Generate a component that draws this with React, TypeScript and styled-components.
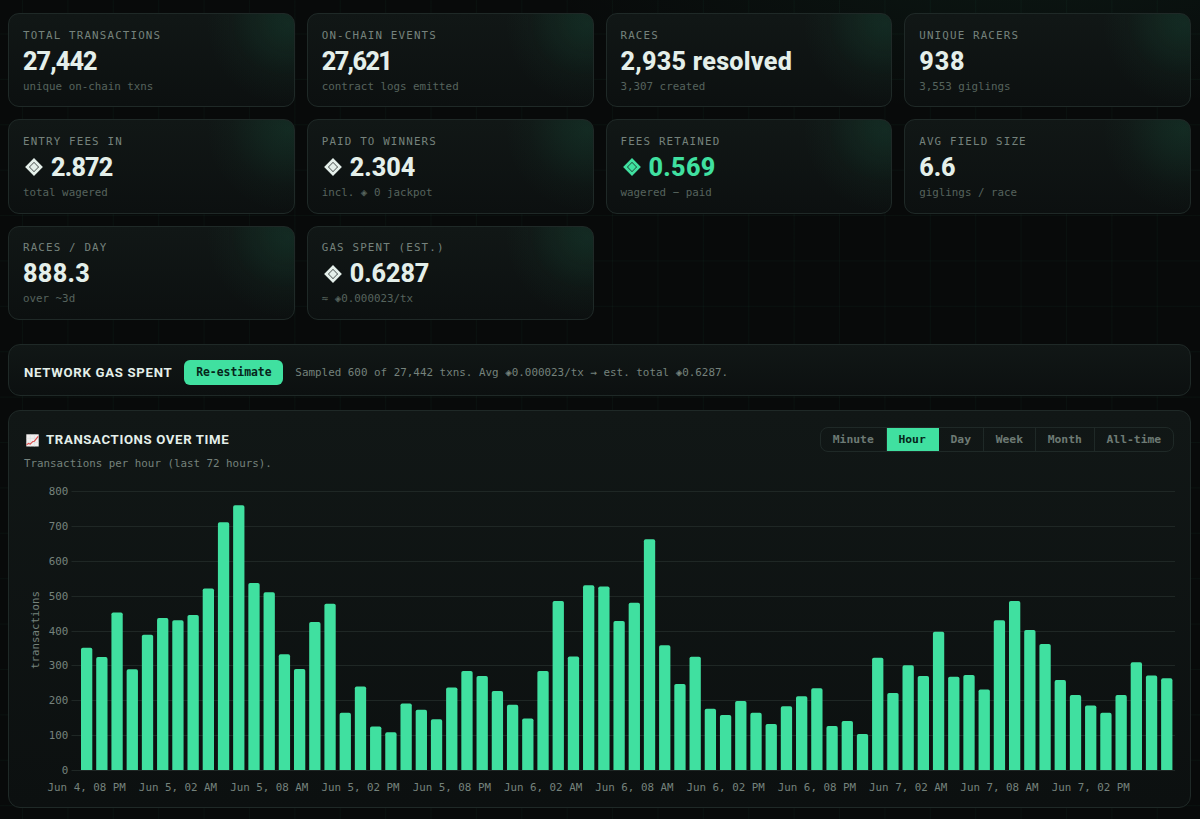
import React from "react";
import styled, { createGlobalStyle } from "styled-components";

const MONO = '"DejaVu Sans Mono", "Liberation Mono", monospace';
const DISPLAY = 'Roboto, "Liberation Sans", sans-serif';

const GlobalStyle = createGlobalStyle`
  * { box-sizing: border-box; }
  html { background: #080a0a; }
  body {
    margin: 0;
    min-height: 819px;
    font-family: ${MONO};
    color: #e4efea;
    overflow: hidden;
    background:
      linear-gradient(90deg, rgba(62, 224, 160, 0.035) 1px, transparent 1px) 22px 0 / 45.4px 45.4px,
      linear-gradient(rgba(62, 224, 160, 0.035) 1px, transparent 1px) 0 33.5px / 45.4px 45.4px,
      radial-gradient(700px 220px at 85% -40px, rgba(62, 224, 160, 0.06), transparent 70%),
      #080a0a;
  }
`;

const Page = styled.main`
  display: flex;
  flex-direction: column;
  height: 819px;
  padding: 13px 9px 11px 8px;
`;

const StatGrid = styled.section`
  display: grid;
  grid-template-columns: repeat(4, 1fr);
  grid-auto-rows: 94.4px;
  gap: 12px;
  margin-bottom: 24px;
`;

const StatCard = styled.article`
  display: flex;
  flex-direction: column;
  padding: 14.6px 14px 11px;
  border: 1px solid #1f2927;
  border-radius: 11px;
  background:
    radial-gradient(circle 82px at calc(100% - 6px) 10px, rgba(40, 190, 130, 0.12), rgba(40, 190, 130, 0.085) 30%, rgba(40, 190, 130, 0.025) 70%, transparent 100%),
    linear-gradient(#111716, #0c1010);
`;

const StatLabel = styled.span`
  height: 14px;
  font-size: 10.85px;
  line-height: 14px;
  letter-spacing: 1.15px;
  color: #75827c;
  white-space: pre;
`;

const StatValue = styled.strong<{ $accent?: boolean; $track?: number }>`
  display: flex;
  align-items: center;
  height: 30px;
  margin: 4px 0 3px;
  font-family: ${DISPLAY};
  font-size: 25.2px;
  font-weight: 800;
  line-height: 30px;
  letter-spacing: ${(p) => p.$track ?? -0.6}px;
  color: ${(p) => (p.$accent ? "#40e0a0" : "#e4efea")};
  white-space: pre;
`;

const Gem = styled.svg`
  flex: none;
  width: 18px;
  height: 18px;
  margin: 0 8px 1px 2px;
`;

const StatNote = styled.span`
  height: 14px;
  font-size: 10.83px;
  line-height: 14px;
  color: #56635d;
  white-space: pre;
`;

const Panel = styled.section`
  border: 1px solid #1f2927;
  border-radius: 12px;
  background: linear-gradient(#111716, #0c1010);
`;

const GasPanel = styled(Panel)`
  display: flex;
  align-items: center;
  gap: 12px;
  height: 52px;
  padding: 5.4px 15px 0;
  margin-bottom: 14px;
`;

const Title = styled.h2<{ $track: number }>`
  margin: 0;
  font-family: ${DISPLAY};
  font-size: 13.2px;
  font-weight: 700;
  line-height: 18px;
  letter-spacing: ${(p) => p.$track}px;
  color: #e4efea;
  white-space: nowrap;
`;

const PrimaryButton = styled.button`
  width: 99px;
  height: 25px;
  padding: 0;
  border: 0;
  border-radius: 6px;
  background: #40e0a0;
  color: #06251a;
  font: 700 11.4px/25px ${MONO};
`;

const GasNote = styled.span`
  font-size: 10.9px;
  color: #75827c;
  white-space: nowrap;
`;

const ChartPanel = styled(Panel)`
  height: 398px;
  padding: 16px 16px 0 15px;
`;

const ChartHeader = styled.header`
  display: flex;
  align-items: flex-start;
  justify-content: space-between;
  height: 26px;
`;

const ChartTitle = styled.div`
  display: flex;
  align-items: center;
  gap: 7px;
  height: 26px;
  padding-left: 2px;
`;

const Segments = styled.div`
  display: flex;
  height: 25px;
  border: 1px solid #1f2927;
  border-radius: 8px;
  overflow: hidden;
`;

const Segment = styled.button<{ $active?: boolean }>`
  padding: 0 11.85px;
  border: 0;
  border-right: 1px solid ${(p) => (p.$active ? "#40e0a0" : "#1f2927")};
  background: ${(p) => (p.$active ? "#40e0a0" : "transparent")};
  color: ${(p) => (p.$active ? "#06251a" : "#6d7a74")};
  font: 700 11.35px/23px ${MONO};
  &:last-child { border-right: 0; }
`;

const ChartNote = styled.p`
  height: 14px;
  margin: 4px 0 0;
  font-size: 10.83px;
  line-height: 14px;
  color: #75827c;
`;

const Chart = styled.svg`
  display: block;
  margin-top: 9px;
  overflow: visible;
  font-family: ${MONO};
  font-size: 10.83px;
`;

type Stat = { label: string; value: string; note: string; gem?: boolean; accent?: boolean; track?: number };

const STATS: Stat[] = [
  { label: "TOTAL TRANSACTIONS", value: "27,442", note: "unique on-chain txns", track: -0.9 },
  { label: "ON-CHAIN EVENTS", value: "27,621", note: "contract logs emitted", track: -1.6 },
  { label: "RACES", value: "2,935 resolved", note: "3,307 created", track: 0.25 },
  { label: "UNIQUE RACERS", value: "938", note: "3,553 giglings", track: 0.9 },
  { label: "ENTRY FEES IN", value: "2.872", note: "total wagered", gem: true, track: -0.8 },
  { label: "PAID TO WINNERS", value: "2.304", note: "incl. ◈ 0 jackpot", gem: true, track: 0 },
  { label: "FEES RETAINED", value: "0.569", note: "wagered − paid", gem: true, accent: true, track: 0.3 },
  { label: "AVG FIELD SIZE", value: "6.6", note: "giglings / race", track: -0.1 },
  { label: "RACES / DAY", value: "888.3", note: "over ~3d", track: 0.3 },
  { label: "GAS SPENT (EST.)", value: "0.6287", note: "≈ ◈0.000023/tx", gem: true, track: -0.1 },
];

const RANGES = ["Minute", "Hour", "Day", "Week", "Month", "All-time"];

const COUNTS = [
  351, 324, 452, 289, 388, 436, 430, 445, 521, 711, 760, 537, 510, 332, 290, 425, 477, 164, 240, 125, 108,
  191, 173, 146, 237, 284, 270, 227, 187, 148, 284, 485, 326, 530, 527, 428, 480, 662, 358, 247, 325, 176,
  158, 198, 164, 132, 183, 212, 235, 126, 141, 103, 322, 221, 301, 270, 397, 268, 273, 231, 430, 485, 402,
  362, 258, 215, 185, 164, 215, 309, 271, 263,
];

const TICKS = [0, 100, 200, 300, 400, 500, 600, 700, 800];
const DATES = [
  "Jun 4, 08 PM", "Jun 5, 02 AM", "Jun 5, 08 AM", "Jun 5, 02 PM", "Jun 5, 08 PM", "Jun 6, 02 AM",
  "Jun 6, 08 AM", "Jun 6, 02 PM", "Jun 6, 08 PM", "Jun 7, 02 AM", "Jun 7, 08 AM", "Jun 7, 02 PM",
];

const BASE = 290;
const UNIT = 0.3484;
const STEP = 15.213;
const LEFT = 57;
const BAR = 11.3;

const barPath = (x: number, h: number) => {
  const top = BASE - h;
  const r = 1.8;
  return `M${x} ${BASE}V${top + r}Q${x} ${top} ${x + r} ${top}H${x + BAR - r}Q${x + BAR} ${top} ${x + BAR} ${top + r}V${BASE}Z`;
};

const GemIcon = () => (
  <Gem viewBox="0 0 18 18" fill="none" stroke="currentColor">
    <path d="M9 2.1L15.9 9L9 15.9L2.1 9Z" strokeWidth="2.8" />
    <path d="M9 4.8L13.2 9L9 13.2L4.8 9Z" fill="currentColor" stroke="none" />
  </Gem>
);

const TrendIcon = () => (
  <svg width="13" height="13" viewBox="0 0 13 13">
    <rect x="0.3" y="0.3" width="12.4" height="12.2" fill="#f1eeee" />
    <path d="M4.3 0.5V12.5M8.4 0.5V12.5M0.5 4.3H12.5M0.5 8.4H12.5" stroke="#d5dcdf" strokeWidth="0.5" />
    <path d="M0.6 10.8L2.6 9.4L4.2 10.2L6.9 7.4L8.4 7.2L12.2 2.4" fill="none" stroke="#dc4a4a" strokeWidth="1.1" />
  </svg>
);

const BarChart = () => (
  <Chart width="1152" height="315">
    {TICKS.map((t) => {
      const y = Math.round(BASE - t * UNIT) + 0.5;
      return (
        <g key={t}>
          <line x1="47.5" x2="1151" y1={y} y2={y} stroke="#1f2725" />
          <text x="44.3" y={y + 3.2} textAnchor="end" fill="#75827c">{t}</text>
        </g>
      );
    })}
    <text transform="translate(14.5 150) rotate(-90)" textAnchor="middle" fill="#75827c">transactions</text>
    {COUNTS.map((c, i) => (
      <path key={i} d={barPath(LEFT + i * STEP, c * UNIT)} fill="#40e0a0" />
    ))}
    {DATES.map((d, i) => (
      <text key={d} x={62.7 + i * STEP * 6} y="311" textAnchor="middle" fill="#75827c">{d}</text>
    ))}
  </Chart>
);

export default function App() {
  return (
    <>
      <GlobalStyle />
      <Page>
        <StatGrid>
          {STATS.map((s) => (
            <StatCard key={s.label}>
              <StatLabel>{s.label}</StatLabel>
              <StatValue $accent={s.accent} $track={s.track}>
                {s.gem && <GemIcon />}
                {s.value}
              </StatValue>
              <StatNote>{s.note}</StatNote>
            </StatCard>
          ))}
        </StatGrid>
        <GasPanel>
          <Title $track={0.7}>NETWORK GAS SPENT</Title>
          <PrimaryButton>Re-estimate</PrimaryButton>
          <GasNote>Sampled 600 of 27,442 txns. Avg ◈0.000023/tx → est. total ◈0.6287.</GasNote>
        </GasPanel>
        <ChartPanel>
          <ChartHeader>
            <ChartTitle>
              <TrendIcon />
              <Title $track={0.64}>TRANSACTIONS OVER TIME</Title>
            </ChartTitle>
            <Segments>
              {RANGES.map((r) => (
                <Segment key={r} $active={r === "Hour"}>{r}</Segment>
              ))}
            </Segments>
          </ChartHeader>
          <ChartNote>Transactions per hour (last 72 hours).</ChartNote>
          <BarChart />
        </ChartPanel>
      </Page>
    </>
  );
}
